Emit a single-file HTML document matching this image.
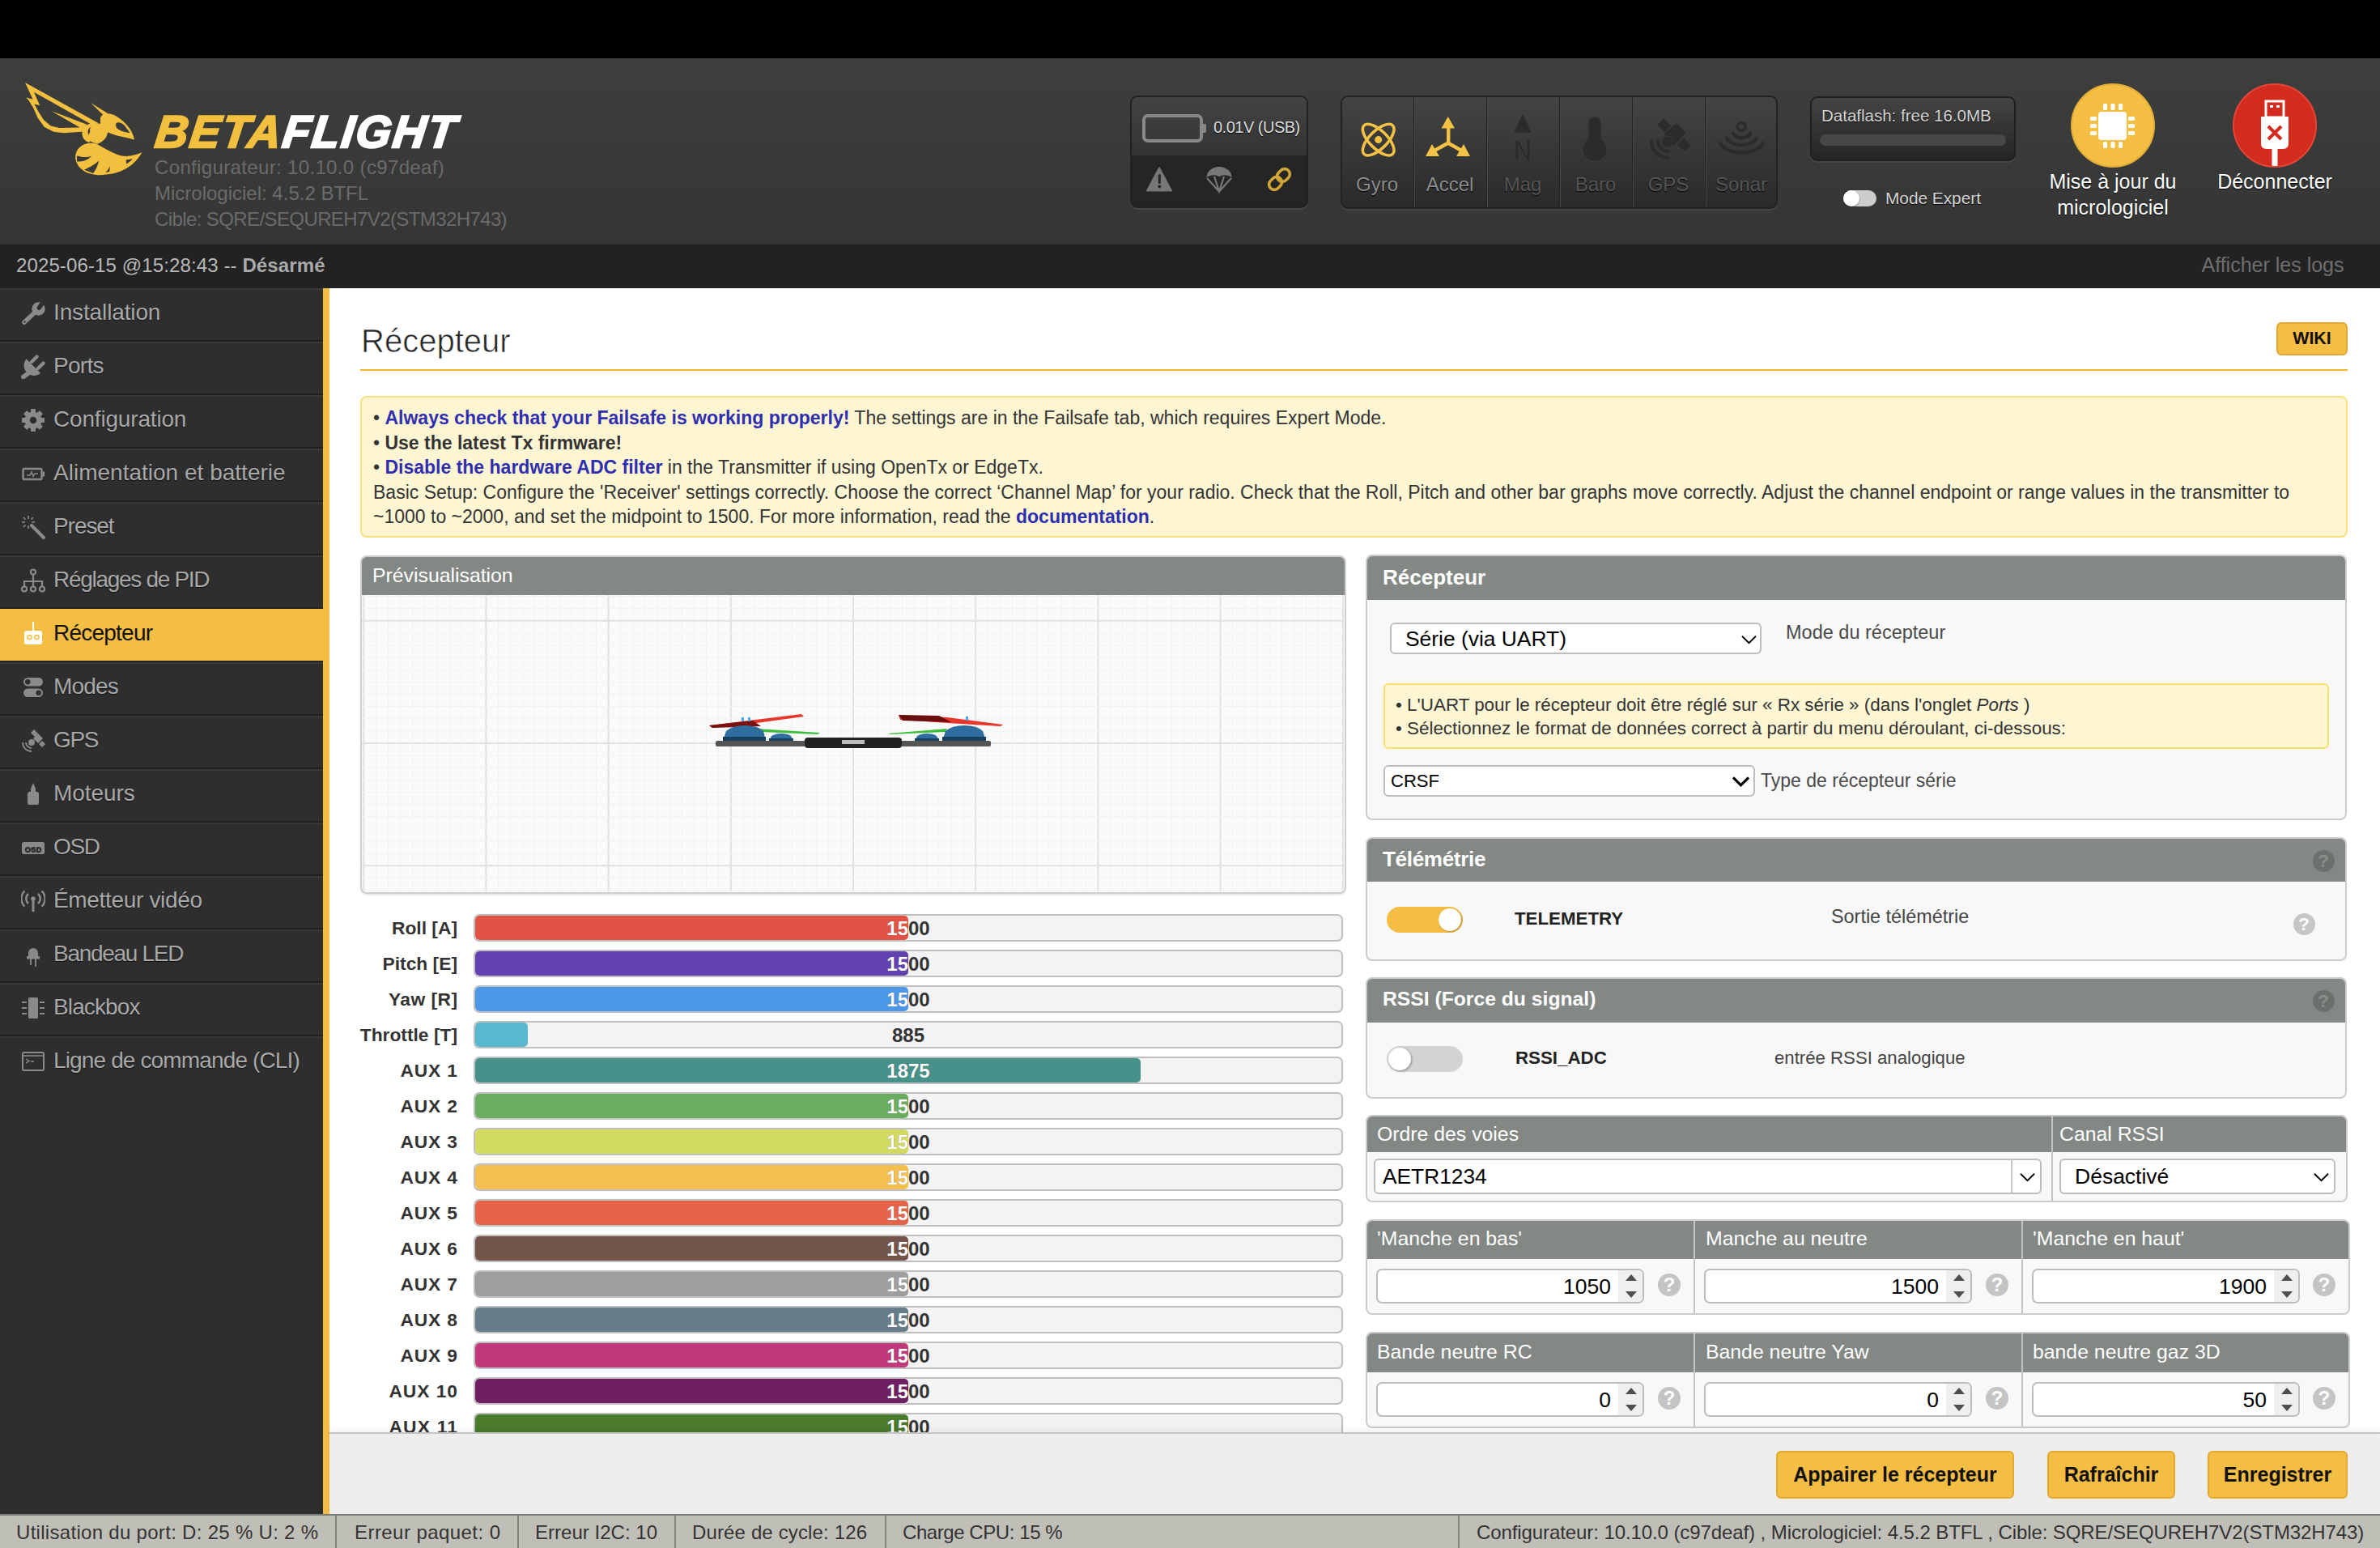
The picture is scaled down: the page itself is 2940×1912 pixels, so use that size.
<!DOCTYPE html>
<html><head><meta charset="utf-8">
<style>
*{box-sizing:border-box;margin:0;padding:0}
html,body{width:2940px;height:1912px;overflow:hidden;background:#fff;font-family:"Liberation Sans",sans-serif}
.abs{position:absolute}
#topbar{position:absolute;left:0;top:0;width:2940px;height:72px;background:#000}
#header{position:absolute;left:0;top:72px;width:2940px;height:230px;background:linear-gradient(#3d3f3d,#343534)}
#status{position:absolute;left:0;top:302px;width:2940px;height:54px;background:#222;color:#b8b8b8}
#sidebar{position:absolute;left:0;top:356px;width:399px;height:1514px;background:#2e2e2e}
#sidebar .item{position:absolute;left:0;width:399px;height:66px;border-top:2px solid #383838;border-bottom:2px solid #1f1f1f;color:#a8a8a8;font-size:28px;line-height:28px;text-shadow:0 1px 1px #111}
#sidebar .item span{position:absolute;left:66px;top:14px;white-space:nowrap}
#sidebar .item.active{background:#f4bd43;color:#111;border-top-color:#f4bd43;border-bottom-color:#222;text-shadow:none}
#ybar{position:absolute;left:399px;top:356px;width:8px;height:1514px;background:#f4bd43}
#content{position:absolute;left:407px;top:356px;width:2533px;height:1414px;background:#fff;overflow:hidden}
#toolbar{position:absolute;left:407px;top:1769px;width:2533px;height:101px;background:#eeeeee;border-top:2px solid #c4c4c4;box-shadow:0 -4px 8px rgba(0,0,0,.05)}
#bottom{position:absolute;left:0;top:1870px;width:2940px;height:42px;background:#c0bfb7;border-top:2px solid #7d7d78;color:#333;font-size:23px}
.btn{position:absolute;background:#f4bd43;border:2px solid #e3a92d;border-radius:6px;color:#111;font-weight:bold;font-size:25px;text-align:center}
</style></head><body>
<div id="topbar"></div>
<div id="header"></div>
<!-- logo -->
<svg class="abs" style="left:20px;top:90px" width="170" height="140" viewBox="0 0 1880 1548">
<g fill="#f3bf3f">
<path d="M122,133 L1127,688 L891,805 L645,821 L511,805 L387,741 L296,618 L237,484 L179,387 L136,334 L227,361 Z M243,262 L1009,693 L859,746 L591,752 L473,725 L377,645 L302,527 L248,425 L323,446 Z" fill-rule="evenodd"/>
<path d="M479,521 L966,706 L880,752 Z"/>
<path d="M1018,410 L1250,552 L1200,585 Z"/>
<path d="M1150,610 C1180,540 1290,540 1380,600 C1500,680 1590,780 1615,915 C1480,870 1340,860 1250,810 C1240,900 1180,940 1110,970 L1020,940 C960,900 990,850 1010,800 C990,740 1050,700 1150,690 Z M1360,700 C1380,660 1440,680 1480,720 C1510,760 1540,800 1555,820 C1480,810 1400,790 1365,740 Z" fill-rule="evenodd"/>
<path d="M900,820 C900,740 960,700 1100,705 C1000,720 960,780 990,850 C1010,900 1020,930 1000,950 C930,930 900,880 900,820 Z"/>
<path d="M930,975 C1010,950 1090,960 1110,975 C1250,1060 1400,1140 1510,1140 C1600,1130 1680,1110 1720,1085 C1620,1260 1450,1390 1150,1395 C950,1395 820,1290 810,1160 C805,1080 850,1010 930,975 Z M830,1130 C900,1160 980,1150 1030,1135 C980,1190 900,1215 830,1210 Z M930,1325 C1000,1290 1080,1250 1130,1200 C1110,1280 1080,1340 1050,1370 Z M1220,1360 C1250,1330 1270,1300 1280,1275 L1275,1350 Z M1500,1190 L1590,1175 C1560,1210 1530,1230 1505,1245 Z" fill-rule="evenodd"/>
</g>
</svg>
<div class="abs" style="left:190px;top:134.5px;font-size:56px;line-height:56px;font-weight:bold;font-style:italic;letter-spacing:2.2px;color:#fff;white-space:nowrap;-webkit-text-stroke:2.4px #fff;transform:skewX(-7deg);transform-origin:0 48px"><span style="color:#f3bf3f;-webkit-text-stroke:2.4px #f3bf3f">BETA</span>FLIGHT</div>
<div class="abs" style="left:191px;top:190.5px;font-size:24px;line-height:32px;color:#6b6b6b;white-space:nowrap"><span style="letter-spacing:0.35px">Configurateur: 10.10.0 (c97deaf)</span><br>Micrologiciel: 4.5.2 BTFL<br><span style="letter-spacing:-0.6px">Cible: SQRE/SEQUREH7V2(STM32H743)</span></div>
<!-- battery widget -->
<div class="abs" style="left:1396px;top:118px;width:220px;height:139px;border-radius:9px;background:#252525;border:2px solid #222;box-shadow:0 2px 0 #474747;overflow:hidden">
<div style="position:absolute;left:0;top:0;width:216px;height:72px;background:linear-gradient(#444,#333)"></div>
</div>
<svg class="abs" style="left:1396px;top:118px" width="220" height="139" viewBox="1396 118 220 139">
<rect x="1413" y="143" width="71" height="31" rx="5" fill="none" stroke="#888" stroke-width="4"/>
<rect x="1484" y="153" width="6" height="11" rx="2" fill="#888"/>
<path d="M1432,207.5 L1447,235.5 L1417,235.5 Z" fill="#777" stroke="#777" stroke-width="2" stroke-linejoin="round"/>
<rect x="1430.8" y="215" width="3" height="12" rx="1.5" fill="#252525"/><circle cx="1432.3" cy="230.5" r="2" fill="#252525"/>
<path d="M1490.5,219 A15.5,13 0 0 1 1521.5,219 Q1514,214 1506,218 Q1498,214 1490.5,219 Z" fill="#777"/>
<path d="M1491,220 L1506,236.5 L1521,220 M1500,218 L1506,236.5 L1512,218" fill="none" stroke="#777" stroke-width="2.2"/>
<g transform="rotate(-45 1580.5 221.5)" fill="none" stroke="#d1a537" stroke-width="3.6">
<rect x="1565" y="215" width="17" height="13" rx="6.5"/><rect x="1579" y="215" width="17" height="13" rx="6.5"/>
</g>
</svg>
<div class="abs" style="left:1499px;top:146px;font-size:20px;line-height:22px;color:#ddd;letter-spacing:-0.5px;text-shadow:0 1px 1px #000;white-space:nowrap">0.01V (USB)</div>
<!-- sensors -->
<div class="abs" style="left:1656px;top:118px;width:540px;height:140px;border-radius:9px;background:linear-gradient(#444,#2a2a2a);border:2px solid #222;box-shadow:0 2px 0 #474747;overflow:hidden">
<div style="position:absolute;left:88px;top:0;width:2px;height:140px;background:#222;border-right:1px solid #474747"></div>
<div style="position:absolute;left:178px;top:0;width:2px;height:140px;background:#222;border-right:1px solid #474747"></div>
<div style="position:absolute;left:268px;top:0;width:2px;height:140px;background:#222;border-right:1px solid #474747"></div>
<div style="position:absolute;left:358px;top:0;width:2px;height:140px;background:#222;border-right:1px solid #474747"></div>
<div style="position:absolute;left:448px;top:0;width:2px;height:140px;background:#222;border-right:1px solid #474747"></div>
</div>
<svg class="abs" style="left:1656px;top:118px" width="540" height="140" viewBox="1656 118 540 140">
<g fill="none" stroke="#f3c143" stroke-width="3.6">
<ellipse cx="1702.7" cy="172.6" rx="25" ry="11" transform="rotate(45 1702.7 172.6)"/>
<ellipse cx="1702.7" cy="172.6" rx="25" ry="11" transform="rotate(-45 1702.7 172.6)"/>
</g>
<circle cx="1702.7" cy="172.6" r="4.5" fill="#f3c143"/>
<g fill="#f3c143">
<rect x="1787" y="157" width="4.4" height="20"/>
<path d="M1780.5,158.5 L1797,158.5 L1788.7,144 Z"/>
<path d="M1789,174 L1791,178 L1773,188 L1771,184 Z"/>
<path d="M1761,193 L1778,193 L1769,178 Z"/>
<path d="M1788.5,174 L1786.5,178 L1804.5,188 L1806.5,184 Z"/>
<path d="M1816,193 L1799,193 L1808,178 Z"/>
</g>
<g fill="#2b2b2b" stroke="#3e3e3e" stroke-width="0.8">
<path d="M1869,164.5 L1893,164.5 L1881,140 Z"/>
<path d="M1872,199 L1872,173 L1876,173 L1886,192 L1886,173 L1890,173 L1890,199 L1886,199 L1876,180 L1876,199 Z"/>
<path d="M1962,152 A8,8 0 0 1 1978,152 L1978,172 A15,15 0 1 1 1962,172 Z"/>
<path d="M2047,154.1 L2054.7,145.9 L2064.7,155.3 L2056.5,164.1 Z M2055.3,165.3 L2070.6,151.8 L2082.9,164.1 L2067.6,180.6 Z M2071.2,179.4 L2080,169.4 L2089.4,179.4 L2081.2,187.6 Z"/>
<circle cx="2059.4" cy="175.3" r="7"/>
<path d="M2040,174 A21,21 0 0 0 2061,195 M2048,173.5 A13,13 0 0 0 2061,186.5" fill="none" stroke="#2b2b2b" stroke-width="4.2" stroke-linecap="round"/>
<circle cx="2151.2" cy="156.5" r="5" fill="none" stroke="#2b2b2b" stroke-width="3.5"/>
<path d="M2141,165 A12,10 0 0 0 2162,165 M2133,171 A20,13 0 0 0 2170,171 M2125,177 A28,17 0 0 0 2178,177" fill="none" stroke="#2b2b2b" stroke-width="4.2" stroke-linecap="round"/>
</g>
</svg>
<div class="abs" style="left:1656px;top:214px;width:540px;font-size:24px;line-height:28px;white-space:nowrap;text-shadow:0 1px 1px #000">
<span class="abs" style="left:0;width:90px;text-align:center;color:#8d8d8d">Gyro</span>
<span class="abs" style="left:90px;width:90px;text-align:center;color:#8d8d8d">Accel</span>
<span class="abs" style="left:180px;width:90px;text-align:center;color:#565656">Mag</span>
<span class="abs" style="left:270px;width:90px;text-align:center;color:#565656">Baro</span>
<span class="abs" style="left:360px;width:90px;text-align:center;color:#565656">GPS</span>
<span class="abs" style="left:450px;width:90px;text-align:center;color:#565656">Sonar</span>
</div>
<!-- dataflash -->
<div class="abs" style="left:2236px;top:119px;width:254px;height:80px;border-radius:9px;background:linear-gradient(#444,#242424);border:2px solid #1f1f1f;box-shadow:0 2px 0 #474747"></div>
<div class="abs" style="left:2250px;top:131px;font-size:20.5px;line-height:24px;color:#d6d6d6;text-shadow:0 1px 1px #000;white-space:nowrap">Dataflash: free 16.0MB</div>
<div class="abs" style="left:2248px;top:166px;width:230px;height:14px;border-radius:7px;background:#474747"></div>
<div class="abs" style="left:2277px;top:235px;width:41px;height:20px;border-radius:10px;background:#cdcdcd"></div>
<div class="abs" style="left:2277px;top:235px;width:20px;height:20px;border-radius:10px;background:#fff;box-shadow:0 1px 2px rgba(0,0,0,.4)"></div>
<div class="abs" style="left:2329px;top:233px;font-size:20.8px;line-height:24px;color:#d6d6d6;text-shadow:0 1px 1px #000;white-space:nowrap">Mode Expert</div>
<!-- flasher -->
<div class="abs" style="left:2558px;top:103px;width:104px;height:104px;border-radius:52px;background:#f3be42;border:2px solid #e2ad38"></div>
<svg class="abs" style="left:2558px;top:103px" width="104" height="104" viewBox="2558 103 104 104" fill="#fff">
<rect x="2592" y="138" width="35" height="35" rx="4"/>
<rect x="2598" y="128" width="5" height="8" rx="1.5"/><rect x="2607.5" y="128" width="5" height="8" rx="1.5"/><rect x="2617" y="128" width="5" height="8" rx="1.5"/>
<rect x="2598" y="175" width="5" height="8" rx="1.5"/><rect x="2607.5" y="175" width="5" height="8" rx="1.5"/><rect x="2617" y="175" width="5" height="8" rx="1.5"/>
<rect x="2582" y="144" width="8" height="5" rx="1.5"/><rect x="2582" y="153" width="8" height="5" rx="1.5"/><rect x="2582" y="162" width="8" height="5" rx="1.5"/>
<rect x="2629" y="144" width="8" height="5" rx="1.5"/><rect x="2629" y="153" width="8" height="5" rx="1.5"/><rect x="2629" y="162" width="8" height="5" rx="1.5"/>
</svg>
<div class="abs" style="left:2510px;top:208px;width:200px;text-align:center;font-size:25px;line-height:32px;color:#fff;text-shadow:0 1px 1px #000">Mise à jour du<br>micrologiciel</div>
<!-- disconnect -->
<div class="abs" style="left:2758px;top:103px;width:104px;height:104px;border-radius:52px;background:#d42b1f;border:2px solid #e54537;overflow:hidden">
<svg width="100" height="100" viewBox="2760 105 100 100">
<rect x="2799" y="125" width="22" height="20" fill="none" stroke="#fff" stroke-width="3"/>
<rect x="2804" y="130" width="4" height="3" fill="#fff"/><rect x="2812" y="130" width="4" height="3" fill="#fff"/>
<path d="M2793,144 L2827,144 L2827,177 Q2827,184 2820,184 L2800,184 Q2793,184 2793,177 Z" fill="#fff"/>
<rect x="2806.5" y="183" width="7" height="25" fill="#fff"/>
<path d="M2802,156 L2818,172 M2818,156 L2802,172" stroke="#d42b1f" stroke-width="4"/>
</svg>
</div>
<div class="abs" style="left:2710px;top:208px;width:200px;text-align:center;font-size:25px;line-height:32px;color:#fff;text-shadow:0 1px 1px #000">Déconnecter</div>

<div id="status"><span class="abs" style="left:20px;top:13.5px;font-size:24px;line-height:24px;letter-spacing:0.12px;white-space:nowrap">2025-06-15 @15:28:43 -- <b style="color:#a9a9a9">Désarmé</b></span><span class="abs" style="right:44.5px;top:12.9px;font-size:25px;line-height:25px;color:#6e6e6e;white-space:nowrap">Afficher les logs</span></div>
<div id="sidebar">
<div class="item" style="top:0px"><svg style="position:absolute;left:26px;top:14px" width="30" height="30" viewBox="0 0 30 30"><path d="M4,26 L17,14" stroke="#8a8a8a" stroke-width="5.6" stroke-linecap="round"/><circle cx="21.5" cy="9.5" r="8.2" fill="#8a8a8a"/><path d="M22.3,8.2 L28,0" stroke="#2e2e2e" stroke-width="5.4" stroke-linecap="round"/><circle cx="4.6" cy="25.4" r="1.2" fill="#2e2e2e"/></svg><span style="letter-spacing:-0.13px">Installation</span></div>
<div class="item" style="top:66px"><svg style="position:absolute;left:26px;top:14px" width="30" height="30" viewBox="0 0 30 30"><path d="M6.5,5.3 L24.3,23 A12.6,12.6 0 0 1 6.5,5.3 Z" fill="#8a8a8a"/><path d="M13,9 L19.5,2.5 M21,17 L27.5,10.5" stroke="#8a8a8a" stroke-width="4.4" stroke-linecap="round"/><path d="M11,21.5 L3,27.5" stroke="#8a8a8a" stroke-width="5.8" stroke-linecap="round"/></svg><span style="letter-spacing:-0.73px">Ports</span></div>
<div class="item" style="top:132px"><svg style="position:absolute;left:26px;top:14px" width="30" height="30" viewBox="0 0 30 30"><g fill="#8a8a8a"><circle cx="15" cy="15" r="10.5"/><rect x="12" y="1" width="6" height="7" rx="1" transform="rotate(0 15 15)"/><rect x="12" y="1" width="6" height="7" rx="1" transform="rotate(45 15 15)"/><rect x="12" y="1" width="6" height="7" rx="1" transform="rotate(90 15 15)"/><rect x="12" y="1" width="6" height="7" rx="1" transform="rotate(135 15 15)"/><rect x="12" y="1" width="6" height="7" rx="1" transform="rotate(180 15 15)"/><rect x="12" y="1" width="6" height="7" rx="1" transform="rotate(225 15 15)"/><rect x="12" y="1" width="6" height="7" rx="1" transform="rotate(270 15 15)"/><rect x="12" y="1" width="6" height="7" rx="1" transform="rotate(315 15 15)"/></g><circle cx="15" cy="15" r="4.2" fill="#2e2e2e"/></svg><span style="letter-spacing:-0.18px">Configuration</span></div>
<div class="item" style="top:198px"><svg style="position:absolute;left:26px;top:14px" width="30" height="30" viewBox="0 0 30 30"><rect x="2.5" y="9" width="23" height="13" rx="1.5" fill="none" stroke="#8a8a8a" stroke-width="2.4"/><rect x="26" y="12.5" width="3" height="6" fill="#8a8a8a"/><path d="M7,17 L11,17 L13,13 L15,18 L17,15 L21,15" fill="none" stroke="#8a8a8a" stroke-width="1.6"/></svg><span style="letter-spacing:0.01px">Alimentation et batterie</span></div>
<div class="item" style="top:264px"><svg style="position:absolute;left:26px;top:14px" width="30" height="30" viewBox="0 0 30 30"><path d="M13,13 L28,28" stroke="#8a8a8a" stroke-width="4" stroke-linecap="round"/><path d="M9,1 L9,5 M9,13 L9,17 M1,9 L5,9 M13,9 L17,9 M3,3 L5.5,5.5 M12.5,12.5 L15,15 M3,15 L5.5,12.5 M12.5,5.5 L15,3" stroke="#8a8a8a" stroke-width="1.6"/></svg><span style="letter-spacing:-1.06px">Preset</span></div>
<div class="item" style="top:330px"><svg style="position:absolute;left:26px;top:14px" width="30" height="30" viewBox="0 0 30 30"><g fill="none" stroke="#8a8a8a" stroke-width="2.2"><circle cx="15" cy="4.5" r="3"/><circle cx="4" cy="25.5" r="3"/><circle cx="15" cy="25.5" r="3"/><circle cx="26" cy="25.5" r="3"/><path d="M15,7.5 L15,22.5 M4,22.5 L4,16 L26,16 L26,22.5"/></g></svg><span style="letter-spacing:-1.30px">Réglages de PID</span></div>
<div class="item active" style="top:396px"><svg style="position:absolute;left:26px;top:14px" width="30" height="30" viewBox="0 0 30 30"><rect x="4" y="11" width="22" height="17" rx="3" fill="#fff"/><rect x="14" y="0" width="2" height="11" fill="#fff"/><circle cx="10.5" cy="19" r="2.6" fill="none" stroke="#f4bd43" stroke-width="1.5"/><circle cx="19.5" cy="19" r="2.6" fill="none" stroke="#f4bd43" stroke-width="1.5"/></svg><span style="letter-spacing:-0.77px">Récepteur</span></div>
<div class="item" style="top:462px"><svg style="position:absolute;left:26px;top:14px" width="30" height="30" viewBox="0 0 30 30"><rect x="3" y="3" width="24" height="10.5" rx="5.2" fill="#8a8a8a"/><circle cx="8.3" cy="8.2" r="3.2" fill="#2e2e2e"/><rect x="3" y="16.5" width="24" height="10.5" rx="5.2" fill="#8a8a8a"/><circle cx="21.7" cy="21.7" r="3.2" fill="#2e2e2e"/></svg><span style="letter-spacing:-0.85px">Modes</span></div>
<div class="item" style="top:528px"><svg style="position:absolute;left:26px;top:14px" width="30" height="30" viewBox="0 0 30 30"><g fill="#8a8a8a"><path d="M12,5 L16,1 L21,6 L17,10 Z M15,12 L21,6 L27,12 L21,18 Z M22,19 L26,15 L30,19 L26,23 Z"/><circle cx="13" cy="17" r="4"/></g><path d="M2,17 A11,11 0 0 0 13,28 M6,17 A7,7 0 0 0 13,24" fill="none" stroke="#8a8a8a" stroke-width="1.8"/></svg><span style="letter-spacing:-1.30px">GPS</span></div>
<div class="item" style="top:594px"><svg style="position:absolute;left:26px;top:14px" width="30" height="30" viewBox="0 0 30 30"><path d="M15,1 L18,8 L18,13 L12,13 L12,8 Z" fill="#8a8a8a"/><rect x="8" y="12" width="14" height="16" rx="2.5" fill="#8a8a8a"/></svg><span style="letter-spacing:-0.07px">Moteurs</span></div>
<div class="item" style="top:660px"><svg style="position:absolute;left:26px;top:14px" width="30" height="30" viewBox="0 0 30 30"><rect x="1" y="8" width="28" height="15" rx="2.5" fill="#8a8a8a"/><text x="15" y="20" font-size="9.5" font-weight="bold" text-anchor="middle" fill="#2e2e2e" font-family="Liberation Sans">OSD</text></svg><span style="letter-spacing:-1.30px">OSD</span></div>
<div class="item" style="top:726px"><svg style="position:absolute;left:26px;top:14px" width="30" height="30" viewBox="0 0 30 30"><circle cx="15" cy="12" r="2.8" fill="#8a8a8a"/><path d="M15,13 L15,28" stroke="#8a8a8a" stroke-width="3"/><path d="M9,6 A8,8 0 0 0 9,18 M21,6 A8,8 0 0 1 21,18 M4.5,2.5 A13,13 0 0 0 4.5,21.5 M25.5,2.5 A13,13 0 0 1 25.5,21.5" fill="none" stroke="#8a8a8a" stroke-width="2.4"/></svg><span style="letter-spacing:-0.33px">Émetteur vidéo</span></div>
<div class="item" style="top:792px"><svg style="position:absolute;left:26px;top:14px" width="30" height="30" viewBox="0 0 30 30"><path d="M9,13 A6,6 0 0 1 21,13 L21,18 L9,18 Z" fill="#8a8a8a"/><rect x="7" y="17" width="16" height="3.5" fill="#8a8a8a"/><path d="M12,20 L12,28 M18,20 L18,30" stroke="#8a8a8a" stroke-width="1.8"/></svg><span style="letter-spacing:-1.30px">Bandeau LED</span></div>
<div class="item" style="top:858px"><svg style="position:absolute;left:26px;top:14px" width="30" height="30" viewBox="0 0 30 30"><rect x="9" y="2" width="12" height="26" rx="1.5" fill="#8a8a8a"/><path d="M1,8 L7,8 M1,15 L7,15 M1,22 L7,22 M23,8 L29,8 M23,15 L29,15 M23,22 L29,22" stroke="#8a8a8a" stroke-width="1.8"/></svg><span style="letter-spacing:-0.87px">Blackbox</span></div>
<div class="item" style="top:924px;border-bottom:none"><svg style="position:absolute;left:26px;top:14px" width="30" height="30" viewBox="0 0 30 30"><rect x="2" y="4" width="26" height="22" rx="1.5" fill="none" stroke="#8a8a8a" stroke-width="2"/><path d="M2,8 L28,8" stroke="#8a8a8a" stroke-width="1.5"/><path d="M6,12 L10,14.5 L6,17 M12,15 L16,15" fill="none" stroke="#8a8a8a" stroke-width="1.4"/></svg><span style="letter-spacing:-0.86px">Ligne de commande (CLI)</span></div>
</div>
<div id="ybar"></div>
<div id="content"></div>
<div class="abs" style="left:446px;top:401px;font-size:40px;line-height:40px;color:#262626;white-space:nowrap;-webkit-text-stroke:0.6px #fff">Récepteur</div>
<div class="abs" style="left:445px;top:456px;width:2455px;height:2px;background:#f2b52e"></div>
<div class="abs" style="left:2812px;top:398px;width:88px;height:41px;border-radius:6px;background:#f4bd43;border:2px solid #e0a935;font-size:21.4px;line-height:37px;font-weight:bold;text-align:center;color:#111">WIKI</div>
<div class="abs" style="left:445px;top:489px;width:2455px;height:175px;border-radius:8px;background:#fef6d3;border:2px solid #f6e27c"></div>
<div class="abs" style="left:461px;top:501px;width:2420px;font-size:23px;line-height:30.5px;color:#333;white-space:nowrap">• <b style="color:#2e2eb0">Always check that your Failsafe is working properly!</b> The settings are in the Failsafe tab, which requires Expert Mode.<br>• <b>Use the latest Tx firmware!</b><br>• <b style="color:#2e2eb0">Disable the hardware ADC filter</b> in the Transmitter if using OpenTx or EdgeTx.<br>Basic Setup: Configure the 'Receiver' settings correctly. Choose the correct ‘Channel Map’ for your radio. Check that the Roll, Pitch and other bar graphs move correctly. Adjust the channel endpoint or range values in the transmitter to<br>~1000 to ~2000, and set the midpoint to 1500. For more information, read the <b style="color:#2e2eb0">documentation</b>.</div>
<div class="abs" style="left:445px;top:686px;width:1218px;height:418px;border-radius:8px;border:2px solid #cfcfcf;background:#fafafa;overflow:hidden;box-shadow:0 2px 1px rgba(0,0,0,.08)">
<div style="position:absolute;left:0;top:0;width:1214px;height:47px;background:#838884"></div>
<svg style="position:absolute;left:0;top:47px" width="1213" height="366"><line x1="2.20" y1="0" x2="2.20" y2="366" stroke="#e1e1e1" stroke-width="2"/><line x1="17.32" y1="0" x2="17.32" y2="366" stroke="#f2f2f2" stroke-width="1"/><line x1="32.44" y1="0" x2="32.44" y2="366" stroke="#f2f2f2" stroke-width="1"/><line x1="47.56" y1="0" x2="47.56" y2="366" stroke="#f2f2f2" stroke-width="1"/><line x1="62.68" y1="0" x2="62.68" y2="366" stroke="#f2f2f2" stroke-width="1"/><line x1="77.80" y1="0" x2="77.80" y2="366" stroke="#f2f2f2" stroke-width="1"/><line x1="92.92" y1="0" x2="92.92" y2="366" stroke="#f2f2f2" stroke-width="1"/><line x1="108.04" y1="0" x2="108.04" y2="366" stroke="#f2f2f2" stroke-width="1"/><line x1="123.16" y1="0" x2="123.16" y2="366" stroke="#f2f2f2" stroke-width="1"/><line x1="138.28" y1="0" x2="138.28" y2="366" stroke="#f2f2f2" stroke-width="1"/><line x1="153.40" y1="0" x2="153.40" y2="366" stroke="#e1e1e1" stroke-width="2"/><line x1="168.52" y1="0" x2="168.52" y2="366" stroke="#f2f2f2" stroke-width="1"/><line x1="183.64" y1="0" x2="183.64" y2="366" stroke="#f2f2f2" stroke-width="1"/><line x1="198.76" y1="0" x2="198.76" y2="366" stroke="#f2f2f2" stroke-width="1"/><line x1="213.88" y1="0" x2="213.88" y2="366" stroke="#f2f2f2" stroke-width="1"/><line x1="229.00" y1="0" x2="229.00" y2="366" stroke="#f2f2f2" stroke-width="1"/><line x1="244.12" y1="0" x2="244.12" y2="366" stroke="#f2f2f2" stroke-width="1"/><line x1="259.24" y1="0" x2="259.24" y2="366" stroke="#f2f2f2" stroke-width="1"/><line x1="274.36" y1="0" x2="274.36" y2="366" stroke="#f2f2f2" stroke-width="1"/><line x1="289.48" y1="0" x2="289.48" y2="366" stroke="#f2f2f2" stroke-width="1"/><line x1="304.60" y1="0" x2="304.60" y2="366" stroke="#e1e1e1" stroke-width="2"/><line x1="319.72" y1="0" x2="319.72" y2="366" stroke="#f2f2f2" stroke-width="1"/><line x1="334.84" y1="0" x2="334.84" y2="366" stroke="#f2f2f2" stroke-width="1"/><line x1="349.96" y1="0" x2="349.96" y2="366" stroke="#f2f2f2" stroke-width="1"/><line x1="365.08" y1="0" x2="365.08" y2="366" stroke="#f2f2f2" stroke-width="1"/><line x1="380.20" y1="0" x2="380.20" y2="366" stroke="#f2f2f2" stroke-width="1"/><line x1="395.32" y1="0" x2="395.32" y2="366" stroke="#f2f2f2" stroke-width="1"/><line x1="410.44" y1="0" x2="410.44" y2="366" stroke="#f2f2f2" stroke-width="1"/><line x1="425.56" y1="0" x2="425.56" y2="366" stroke="#f2f2f2" stroke-width="1"/><line x1="440.68" y1="0" x2="440.68" y2="366" stroke="#f2f2f2" stroke-width="1"/><line x1="455.80" y1="0" x2="455.80" y2="366" stroke="#e1e1e1" stroke-width="2"/><line x1="470.92" y1="0" x2="470.92" y2="366" stroke="#f2f2f2" stroke-width="1"/><line x1="486.04" y1="0" x2="486.04" y2="366" stroke="#f2f2f2" stroke-width="1"/><line x1="501.16" y1="0" x2="501.16" y2="366" stroke="#f2f2f2" stroke-width="1"/><line x1="516.28" y1="0" x2="516.28" y2="366" stroke="#f2f2f2" stroke-width="1"/><line x1="531.40" y1="0" x2="531.40" y2="366" stroke="#f2f2f2" stroke-width="1"/><line x1="546.52" y1="0" x2="546.52" y2="366" stroke="#f2f2f2" stroke-width="1"/><line x1="561.64" y1="0" x2="561.64" y2="366" stroke="#f2f2f2" stroke-width="1"/><line x1="576.76" y1="0" x2="576.76" y2="366" stroke="#f2f2f2" stroke-width="1"/><line x1="591.88" y1="0" x2="591.88" y2="366" stroke="#f2f2f2" stroke-width="1"/><line x1="607.00" y1="0" x2="607.00" y2="366" stroke="#e1e1e1" stroke-width="2"/><line x1="622.12" y1="0" x2="622.12" y2="366" stroke="#f2f2f2" stroke-width="1"/><line x1="637.24" y1="0" x2="637.24" y2="366" stroke="#f2f2f2" stroke-width="1"/><line x1="652.36" y1="0" x2="652.36" y2="366" stroke="#f2f2f2" stroke-width="1"/><line x1="667.48" y1="0" x2="667.48" y2="366" stroke="#f2f2f2" stroke-width="1"/><line x1="682.60" y1="0" x2="682.60" y2="366" stroke="#f2f2f2" stroke-width="1"/><line x1="697.72" y1="0" x2="697.72" y2="366" stroke="#f2f2f2" stroke-width="1"/><line x1="712.84" y1="0" x2="712.84" y2="366" stroke="#f2f2f2" stroke-width="1"/><line x1="727.96" y1="0" x2="727.96" y2="366" stroke="#f2f2f2" stroke-width="1"/><line x1="743.08" y1="0" x2="743.08" y2="366" stroke="#f2f2f2" stroke-width="1"/><line x1="758.20" y1="0" x2="758.20" y2="366" stroke="#e1e1e1" stroke-width="2"/><line x1="773.32" y1="0" x2="773.32" y2="366" stroke="#f2f2f2" stroke-width="1"/><line x1="788.44" y1="0" x2="788.44" y2="366" stroke="#f2f2f2" stroke-width="1"/><line x1="803.56" y1="0" x2="803.56" y2="366" stroke="#f2f2f2" stroke-width="1"/><line x1="818.68" y1="0" x2="818.68" y2="366" stroke="#f2f2f2" stroke-width="1"/><line x1="833.80" y1="0" x2="833.80" y2="366" stroke="#f2f2f2" stroke-width="1"/><line x1="848.92" y1="0" x2="848.92" y2="366" stroke="#f2f2f2" stroke-width="1"/><line x1="864.04" y1="0" x2="864.04" y2="366" stroke="#f2f2f2" stroke-width="1"/><line x1="879.16" y1="0" x2="879.16" y2="366" stroke="#f2f2f2" stroke-width="1"/><line x1="894.28" y1="0" x2="894.28" y2="366" stroke="#f2f2f2" stroke-width="1"/><line x1="909.40" y1="0" x2="909.40" y2="366" stroke="#e1e1e1" stroke-width="2"/><line x1="924.52" y1="0" x2="924.52" y2="366" stroke="#f2f2f2" stroke-width="1"/><line x1="939.64" y1="0" x2="939.64" y2="366" stroke="#f2f2f2" stroke-width="1"/><line x1="954.76" y1="0" x2="954.76" y2="366" stroke="#f2f2f2" stroke-width="1"/><line x1="969.88" y1="0" x2="969.88" y2="366" stroke="#f2f2f2" stroke-width="1"/><line x1="985.00" y1="0" x2="985.00" y2="366" stroke="#f2f2f2" stroke-width="1"/><line x1="1000.12" y1="0" x2="1000.12" y2="366" stroke="#f2f2f2" stroke-width="1"/><line x1="1015.24" y1="0" x2="1015.24" y2="366" stroke="#f2f2f2" stroke-width="1"/><line x1="1030.36" y1="0" x2="1030.36" y2="366" stroke="#f2f2f2" stroke-width="1"/><line x1="1045.48" y1="0" x2="1045.48" y2="366" stroke="#f2f2f2" stroke-width="1"/><line x1="1060.60" y1="0" x2="1060.60" y2="366" stroke="#e1e1e1" stroke-width="2"/><line x1="1075.72" y1="0" x2="1075.72" y2="366" stroke="#f2f2f2" stroke-width="1"/><line x1="1090.84" y1="0" x2="1090.84" y2="366" stroke="#f2f2f2" stroke-width="1"/><line x1="1105.96" y1="0" x2="1105.96" y2="366" stroke="#f2f2f2" stroke-width="1"/><line x1="1121.08" y1="0" x2="1121.08" y2="366" stroke="#f2f2f2" stroke-width="1"/><line x1="1136.20" y1="0" x2="1136.20" y2="366" stroke="#f2f2f2" stroke-width="1"/><line x1="1151.32" y1="0" x2="1151.32" y2="366" stroke="#f2f2f2" stroke-width="1"/><line x1="1166.44" y1="0" x2="1166.44" y2="366" stroke="#f2f2f2" stroke-width="1"/><line x1="1181.56" y1="0" x2="1181.56" y2="366" stroke="#f2f2f2" stroke-width="1"/><line x1="1196.68" y1="0" x2="1196.68" y2="366" stroke="#f2f2f2" stroke-width="1"/><line x1="1211.80" y1="0" x2="1211.80" y2="366" stroke="#e1e1e1" stroke-width="2"/><line x1="0" y1="1.56" x2="1213" y2="1.56" stroke="#f2f2f2" stroke-width="1"/><line x1="0" y1="16.68" x2="1213" y2="16.68" stroke="#f2f2f2" stroke-width="1"/><line x1="0" y1="31.80" x2="1213" y2="31.80" stroke="#e1e1e1" stroke-width="2"/><line x1="0" y1="46.92" x2="1213" y2="46.92" stroke="#f2f2f2" stroke-width="1"/><line x1="0" y1="62.04" x2="1213" y2="62.04" stroke="#f2f2f2" stroke-width="1"/><line x1="0" y1="77.16" x2="1213" y2="77.16" stroke="#f2f2f2" stroke-width="1"/><line x1="0" y1="92.28" x2="1213" y2="92.28" stroke="#f2f2f2" stroke-width="1"/><line x1="0" y1="107.40" x2="1213" y2="107.40" stroke="#f2f2f2" stroke-width="1"/><line x1="0" y1="122.52" x2="1213" y2="122.52" stroke="#f2f2f2" stroke-width="1"/><line x1="0" y1="137.64" x2="1213" y2="137.64" stroke="#f2f2f2" stroke-width="1"/><line x1="0" y1="152.76" x2="1213" y2="152.76" stroke="#f2f2f2" stroke-width="1"/><line x1="0" y1="167.88" x2="1213" y2="167.88" stroke="#f2f2f2" stroke-width="1"/><line x1="0" y1="183.00" x2="1213" y2="183.00" stroke="#e1e1e1" stroke-width="2"/><line x1="0" y1="198.12" x2="1213" y2="198.12" stroke="#f2f2f2" stroke-width="1"/><line x1="0" y1="213.24" x2="1213" y2="213.24" stroke="#f2f2f2" stroke-width="1"/><line x1="0" y1="228.36" x2="1213" y2="228.36" stroke="#f2f2f2" stroke-width="1"/><line x1="0" y1="243.48" x2="1213" y2="243.48" stroke="#f2f2f2" stroke-width="1"/><line x1="0" y1="258.60" x2="1213" y2="258.60" stroke="#f2f2f2" stroke-width="1"/><line x1="0" y1="273.72" x2="1213" y2="273.72" stroke="#f2f2f2" stroke-width="1"/><line x1="0" y1="288.84" x2="1213" y2="288.84" stroke="#f2f2f2" stroke-width="1"/><line x1="0" y1="303.96" x2="1213" y2="303.96" stroke="#f2f2f2" stroke-width="1"/><line x1="0" y1="319.08" x2="1213" y2="319.08" stroke="#f2f2f2" stroke-width="1"/><line x1="0" y1="334.20" x2="1213" y2="334.20" stroke="#e1e1e1" stroke-width="2"/><line x1="0" y1="349.32" x2="1213" y2="349.32" stroke="#f2f2f2" stroke-width="1"/><line x1="0" y1="364.44" x2="1213" y2="364.44" stroke="#f2f2f2" stroke-width="1"/></svg>
</div>
<div class="abs" style="left:460px;top:697px;font-size:24.8px;line-height:28px;color:#fff;white-space:nowrap">Prévisualisation</div>
<svg class="abs" style="left:860px;top:870px" width="400" height="70" viewBox="860 870 400 70">
<path d="M876,896 L990,882 L993,885 L935,893 L880,899 Z" fill="#e8372a"/>
<path d="M876,896 L930,890 L940,897 L880,899 Z" fill="#7a1010"/>
<path d="M934,900 L1013,905 L1010,907 L940,904 Z" fill="#3cc03c"/>
<path d="M1110,883 L1170,886 L1239,895 L1236,897 L1170,893 L1112,889 Z" fill="#e8372a"/>
<path d="M1110,883 L1160,884 L1175,892 L1115,890 Z" fill="#6a0f0f"/>
<path d="M1097,906 L1170,900 L1168,904 L1100,907 Z" fill="#3cc03c"/>
<rect x="884" y="915" width="340" height="7" rx="2" fill="#555"/>
<rect x="994" y="911" width="120" height="13" rx="4" fill="#222"/>
<rect x="1040" y="914" width="28" height="5" fill="#bbb"/>
<path d="M893,915 L897,903 Q905,896 920,896 Q936,896 943,903 L946,915 Z" fill="#2f6d9e"/>
<path d="M950,915 L953,909 Q958,906 965,906 Q973,906 977,909 L980,915 Z" fill="#2f6d9e"/>
<path d="M1164,915 L1168,903 Q1176,896 1191,896 Q1207,896 1214,903 L1218,915 Z" fill="#2f6d9e"/>
<path d="M1130,915 L1133,909 Q1138,906 1145,906 Q1153,906 1157,909 L1160,915 Z" fill="#2f6d9e"/>
<rect x="893" y="910" width="53" height="5" fill="#173f5e"/><rect x="1164" y="910" width="54" height="5" fill="#173f5e"/>
<rect x="950" y="912" width="30" height="3" fill="#173f5e"/><rect x="1130" y="912" width="30" height="3" fill="#173f5e"/>
<rect x="916" y="886" width="3" height="5" fill="#4aa8e8"/><rect x="924" y="886" width="3" height="5" fill="#4aa8e8"/><rect x="1193" y="885" width="3" height="5" fill="#4aa8e8"/>
</svg>
<div class="abs" style="left:385.00px;top:1132px;width:180px;text-align:right;font-size:22.8px;line-height:28px;font-weight:bold;color:#333;white-space:nowrap;letter-spacing:0px">Roll [A]</div>
<div class="abs" style="left:585px;top:1129px;width:1074px;height:34px;border-radius:7px;border:2px solid #bfbfbf;background:#f3f3f3;overflow:hidden"><div style="position:absolute;left:0;top:0;width:535px;height:30px;background:#e05345;border-radius:5px"></div><div style="position:absolute;left:0;top:2px;width:1070px;text-align:center;font-size:24px;line-height:28px;font-weight:bold;color:#333">1500</div><div style="position:absolute;left:0;top:0;width:535px;height:30px;overflow:hidden"><div style="position:absolute;left:0;top:2px;width:1070px;text-align:center;font-size:24px;line-height:28px;font-weight:bold;color:#fff">1500</div></div></div>
<div class="abs" style="left:385.00px;top:1176px;width:180px;text-align:right;font-size:22.8px;line-height:28px;font-weight:bold;color:#333;white-space:nowrap;letter-spacing:0px">Pitch [E]</div>
<div class="abs" style="left:585px;top:1173px;width:1074px;height:34px;border-radius:7px;border:2px solid #bfbfbf;background:#f3f3f3;overflow:hidden"><div style="position:absolute;left:0;top:0;width:535px;height:30px;background:#6441b0;border-radius:5px"></div><div style="position:absolute;left:0;top:2px;width:1070px;text-align:center;font-size:24px;line-height:28px;font-weight:bold;color:#333">1500</div><div style="position:absolute;left:0;top:0;width:535px;height:30px;overflow:hidden"><div style="position:absolute;left:0;top:2px;width:1070px;text-align:center;font-size:24px;line-height:28px;font-weight:bold;color:#fff">1500</div></div></div>
<div class="abs" style="left:385.45px;top:1220px;width:180px;text-align:right;font-size:22.8px;line-height:28px;font-weight:bold;color:#333;white-space:nowrap;letter-spacing:0.45px">Yaw [R]</div>
<div class="abs" style="left:585px;top:1217px;width:1074px;height:34px;border-radius:7px;border:2px solid #bfbfbf;background:#f3f3f3;overflow:hidden"><div style="position:absolute;left:0;top:0;width:535px;height:30px;background:#4d97e8;border-radius:5px"></div><div style="position:absolute;left:0;top:2px;width:1070px;text-align:center;font-size:24px;line-height:28px;font-weight:bold;color:#333">1500</div><div style="position:absolute;left:0;top:0;width:535px;height:30px;overflow:hidden"><div style="position:absolute;left:0;top:2px;width:1070px;text-align:center;font-size:24px;line-height:28px;font-weight:bold;color:#fff">1500</div></div></div>
<div class="abs" style="left:385.00px;top:1264px;width:180px;text-align:right;font-size:22.8px;line-height:28px;font-weight:bold;color:#333;white-space:nowrap;letter-spacing:0px">Throttle [T]</div>
<div class="abs" style="left:585px;top:1261px;width:1074px;height:34px;border-radius:7px;border:2px solid #bfbfbf;background:#f3f3f3;overflow:hidden"><div style="position:absolute;left:0;top:0;width:65px;height:30px;background:#57b8cf;border-radius:5px"></div><div style="position:absolute;left:0;top:2px;width:1070px;text-align:center;font-size:24px;line-height:28px;font-weight:bold;color:#333">885</div><div style="position:absolute;left:0;top:0;width:65px;height:30px;overflow:hidden"><div style="position:absolute;left:0;top:2px;width:1070px;text-align:center;font-size:24px;line-height:28px;font-weight:bold;color:#fff">885</div></div></div>
<div class="abs" style="left:385.85px;top:1308px;width:180px;text-align:right;font-size:22.8px;line-height:28px;font-weight:bold;color:#333;white-space:nowrap;letter-spacing:0.85px">AUX 1</div>
<div class="abs" style="left:585px;top:1305px;width:1074px;height:34px;border-radius:7px;border:2px solid #bfbfbf;background:#f3f3f3;overflow:hidden"><div style="position:absolute;left:0;top:0;width:822px;height:30px;background:#46918a;border-radius:5px"></div><div style="position:absolute;left:0;top:2px;width:1070px;text-align:center;font-size:24px;line-height:28px;font-weight:bold;color:#333">1875</div><div style="position:absolute;left:0;top:0;width:822px;height:30px;overflow:hidden"><div style="position:absolute;left:0;top:2px;width:1070px;text-align:center;font-size:24px;line-height:28px;font-weight:bold;color:#fff">1875</div></div></div>
<div class="abs" style="left:385.85px;top:1352px;width:180px;text-align:right;font-size:22.8px;line-height:28px;font-weight:bold;color:#333;white-space:nowrap;letter-spacing:0.85px">AUX 2</div>
<div class="abs" style="left:585px;top:1349px;width:1074px;height:34px;border-radius:7px;border:2px solid #bfbfbf;background:#f3f3f3;overflow:hidden"><div style="position:absolute;left:0;top:0;width:535px;height:30px;background:#6aad5e;border-radius:5px"></div><div style="position:absolute;left:0;top:2px;width:1070px;text-align:center;font-size:24px;line-height:28px;font-weight:bold;color:#333">1500</div><div style="position:absolute;left:0;top:0;width:535px;height:30px;overflow:hidden"><div style="position:absolute;left:0;top:2px;width:1070px;text-align:center;font-size:24px;line-height:28px;font-weight:bold;color:#fff">1500</div></div></div>
<div class="abs" style="left:385.85px;top:1396px;width:180px;text-align:right;font-size:22.8px;line-height:28px;font-weight:bold;color:#333;white-space:nowrap;letter-spacing:0.85px">AUX 3</div>
<div class="abs" style="left:585px;top:1393px;width:1074px;height:34px;border-radius:7px;border:2px solid #bfbfbf;background:#f3f3f3;overflow:hidden"><div style="position:absolute;left:0;top:0;width:535px;height:30px;background:#d3da62;border-radius:5px"></div><div style="position:absolute;left:0;top:2px;width:1070px;text-align:center;font-size:24px;line-height:28px;font-weight:bold;color:#333">1500</div><div style="position:absolute;left:0;top:0;width:535px;height:30px;overflow:hidden"><div style="position:absolute;left:0;top:2px;width:1070px;text-align:center;font-size:24px;line-height:28px;font-weight:bold;color:#fff">1500</div></div></div>
<div class="abs" style="left:385.85px;top:1440px;width:180px;text-align:right;font-size:22.8px;line-height:28px;font-weight:bold;color:#333;white-space:nowrap;letter-spacing:0.85px">AUX 4</div>
<div class="abs" style="left:585px;top:1437px;width:1074px;height:34px;border-radius:7px;border:2px solid #bfbfbf;background:#f3f3f3;overflow:hidden"><div style="position:absolute;left:0;top:0;width:535px;height:30px;background:#f3c050;border-radius:5px"></div><div style="position:absolute;left:0;top:2px;width:1070px;text-align:center;font-size:24px;line-height:28px;font-weight:bold;color:#333">1500</div><div style="position:absolute;left:0;top:0;width:535px;height:30px;overflow:hidden"><div style="position:absolute;left:0;top:2px;width:1070px;text-align:center;font-size:24px;line-height:28px;font-weight:bold;color:#fff">1500</div></div></div>
<div class="abs" style="left:385.85px;top:1484px;width:180px;text-align:right;font-size:22.8px;line-height:28px;font-weight:bold;color:#333;white-space:nowrap;letter-spacing:0.85px">AUX 5</div>
<div class="abs" style="left:585px;top:1481px;width:1074px;height:34px;border-radius:7px;border:2px solid #bfbfbf;background:#f3f3f3;overflow:hidden"><div style="position:absolute;left:0;top:0;width:535px;height:30px;background:#e6644a;border-radius:5px"></div><div style="position:absolute;left:0;top:2px;width:1070px;text-align:center;font-size:24px;line-height:28px;font-weight:bold;color:#333">1500</div><div style="position:absolute;left:0;top:0;width:535px;height:30px;overflow:hidden"><div style="position:absolute;left:0;top:2px;width:1070px;text-align:center;font-size:24px;line-height:28px;font-weight:bold;color:#fff">1500</div></div></div>
<div class="abs" style="left:385.85px;top:1528px;width:180px;text-align:right;font-size:22.8px;line-height:28px;font-weight:bold;color:#333;white-space:nowrap;letter-spacing:0.85px">AUX 6</div>
<div class="abs" style="left:585px;top:1525px;width:1074px;height:34px;border-radius:7px;border:2px solid #bfbfbf;background:#f3f3f3;overflow:hidden"><div style="position:absolute;left:0;top:0;width:535px;height:30px;background:#73554b;border-radius:5px"></div><div style="position:absolute;left:0;top:2px;width:1070px;text-align:center;font-size:24px;line-height:28px;font-weight:bold;color:#333">1500</div><div style="position:absolute;left:0;top:0;width:535px;height:30px;overflow:hidden"><div style="position:absolute;left:0;top:2px;width:1070px;text-align:center;font-size:24px;line-height:28px;font-weight:bold;color:#fff">1500</div></div></div>
<div class="abs" style="left:385.85px;top:1572px;width:180px;text-align:right;font-size:22.8px;line-height:28px;font-weight:bold;color:#333;white-space:nowrap;letter-spacing:0.85px">AUX 7</div>
<div class="abs" style="left:585px;top:1569px;width:1074px;height:34px;border-radius:7px;border:2px solid #bfbfbf;background:#f3f3f3;overflow:hidden"><div style="position:absolute;left:0;top:0;width:535px;height:30px;background:#9e9e9e;border-radius:5px"></div><div style="position:absolute;left:0;top:2px;width:1070px;text-align:center;font-size:24px;line-height:28px;font-weight:bold;color:#333">1500</div><div style="position:absolute;left:0;top:0;width:535px;height:30px;overflow:hidden"><div style="position:absolute;left:0;top:2px;width:1070px;text-align:center;font-size:24px;line-height:28px;font-weight:bold;color:#fff">1500</div></div></div>
<div class="abs" style="left:385.85px;top:1616px;width:180px;text-align:right;font-size:22.8px;line-height:28px;font-weight:bold;color:#333;white-space:nowrap;letter-spacing:0.85px">AUX 8</div>
<div class="abs" style="left:585px;top:1613px;width:1074px;height:34px;border-radius:7px;border:2px solid #bfbfbf;background:#f3f3f3;overflow:hidden"><div style="position:absolute;left:0;top:0;width:535px;height:30px;background:#667c89;border-radius:5px"></div><div style="position:absolute;left:0;top:2px;width:1070px;text-align:center;font-size:24px;line-height:28px;font-weight:bold;color:#333">1500</div><div style="position:absolute;left:0;top:0;width:535px;height:30px;overflow:hidden"><div style="position:absolute;left:0;top:2px;width:1070px;text-align:center;font-size:24px;line-height:28px;font-weight:bold;color:#fff">1500</div></div></div>
<div class="abs" style="left:385.85px;top:1660px;width:180px;text-align:right;font-size:22.8px;line-height:28px;font-weight:bold;color:#333;white-space:nowrap;letter-spacing:0.85px">AUX 9</div>
<div class="abs" style="left:585px;top:1657px;width:1074px;height:34px;border-radius:7px;border:2px solid #bfbfbf;background:#f3f3f3;overflow:hidden"><div style="position:absolute;left:0;top:0;width:535px;height:30px;background:#c03a7b;border-radius:5px"></div><div style="position:absolute;left:0;top:2px;width:1070px;text-align:center;font-size:24px;line-height:28px;font-weight:bold;color:#333">1500</div><div style="position:absolute;left:0;top:0;width:535px;height:30px;overflow:hidden"><div style="position:absolute;left:0;top:2px;width:1070px;text-align:center;font-size:24px;line-height:28px;font-weight:bold;color:#fff">1500</div></div></div>
<div class="abs" style="left:385.95px;top:1704px;width:180px;text-align:right;font-size:22.8px;line-height:28px;font-weight:bold;color:#333;white-space:nowrap;letter-spacing:0.95px">AUX 10</div>
<div class="abs" style="left:585px;top:1701px;width:1074px;height:34px;border-radius:7px;border:2px solid #bfbfbf;background:#f3f3f3;overflow:hidden"><div style="position:absolute;left:0;top:0;width:535px;height:30px;background:#6e1e63;border-radius:5px"></div><div style="position:absolute;left:0;top:2px;width:1070px;text-align:center;font-size:24px;line-height:28px;font-weight:bold;color:#333">1500</div><div style="position:absolute;left:0;top:0;width:535px;height:30px;overflow:hidden"><div style="position:absolute;left:0;top:2px;width:1070px;text-align:center;font-size:24px;line-height:28px;font-weight:bold;color:#fff">1500</div></div></div>
<div class="abs" style="left:386.20px;top:1748px;width:180px;text-align:right;font-size:22.8px;line-height:28px;font-weight:bold;color:#333;white-space:nowrap;letter-spacing:1.2px">AUX 11</div>
<div class="abs" style="left:585px;top:1745px;width:1074px;height:34px;border-radius:7px;border:2px solid #bfbfbf;background:#f3f3f3;overflow:hidden"><div style="position:absolute;left:0;top:0;width:535px;height:30px;background:#497b2b;border-radius:5px"></div><div style="position:absolute;left:0;top:2px;width:1070px;text-align:center;font-size:24px;line-height:28px;font-weight:bold;color:#333">1500</div><div style="position:absolute;left:0;top:0;width:535px;height:30px;overflow:hidden"><div style="position:absolute;left:0;top:2px;width:1070px;text-align:center;font-size:24px;line-height:28px;font-weight:bold;color:#fff">1500</div></div></div>
<div class="abs" style="left:1687px;top:685px;width:1212px;height:328px;border-radius:8px;border:2px solid #cbcbcb;background:#f8f8f8;overflow:hidden"><div style="position:absolute;left:0;top:0;width:100%;height:54px;background:#838884"></div></div>
<div class="abs" style="left:1708px;top:700.4px;font-size:26px;line-height:26px;color:#fff;font-weight:bold;white-space:nowrap;">Récepteur</div>
<div class="abs" style="left:1717px;top:769px;width:459px;height:39px;border-radius:6px;border:2px solid #bdbdbd;background:#fff"></div>
<div class="abs" style="left:1736px;top:775.7px;font-size:26.4px;line-height:26.4px;color:#000;font-weight:normal;white-space:nowrap;">Série (via UART)</div>
<svg class="abs" style="left:2148.5px;top:777.5px" width="23" height="23"><path d="M3,7.760000000000001 L11.5,16.259999999999998 L20,7.760000000000001" fill="none" stroke="#000" stroke-width="1.8"/></svg>
<div class="abs" style="left:2206px;top:769.6px;font-size:23.5px;line-height:23.5px;color:#4a4a4a;font-weight:normal;white-space:nowrap;">Mode du récepteur</div>
<div class="abs" style="left:1709px;top:844px;width:1168px;height:81px;border-radius:6px;border:2px solid #f8df70;background:#fef6d3"></div>
<div class="abs" style="left:1724px;top:855.7px;font-size:22.4px;line-height:29px;color:#333;white-space:nowrap">• L'UART pour le récepteur doit être réglé sur « Rx série » (dans l'onglet <i>Ports</i> )<br>• Sélectionnez le format de données correct à partir du menu déroulant, ci-dessous:</div>
<div class="abs" style="left:1709px;top:945px;width:459px;height:39px;border-radius:6px;border:2px solid #bdbdbd;background:#fff"></div>
<div class="abs" style="left:1718px;top:953.8px;font-size:22px;line-height:22px;color:#000;font-weight:normal;white-space:nowrap;">CRSF</div>
<svg class="abs" style="left:2137.5px;top:951.5px" width="25" height="25"><path d="M3,8.32 L12.5,17.82 L22,8.32" fill="none" stroke="#000" stroke-width="3.2"/></svg>
<div class="abs" style="left:2175px;top:952.5px;font-size:23px;line-height:23px;color:#4a4a4a;font-weight:normal;white-space:nowrap;">Type de récepteur série</div>
<div class="abs" style="left:1687px;top:1034px;width:1212px;height:153px;border-radius:8px;border:2px solid #cbcbcb;background:#f8f8f8;overflow:hidden"><div style="position:absolute;left:0;top:0;width:100%;height:53px;background:#838884"></div></div>
<div class="abs" style="left:1708px;top:1048.0px;font-size:26px;line-height:26px;color:#fff;font-weight:bold;white-space:nowrap;letter-spacing:-0.3px">Télémétrie</div>
<div class="abs" style="left:2856.5px;top:1049.5px;width:27.0px;height:27.0px;border-radius:50%;background:#6c706d;color:#8a8e8b;font-size:22.9px;line-height:27.0px;text-align:center;font-weight:bold">?</div>
<div class="abs" style="left:1713px;top:1120px;width:94px;height:32px;border-radius:16px;background:#f4bd43"></div>
<div class="abs" style="left:1777px;top:1122px;width:28px;height:28px;border-radius:50%;background:#fff;box-shadow:1px 1px 2px rgba(120,80,0,.5)"></div>
<div class="abs" style="left:1871px;top:1123.9px;font-size:22.3px;line-height:22.3px;color:#222;font-weight:bold;white-space:nowrap;">TELEMETRY</div>
<div class="abs" style="left:2262px;top:1120.7px;font-size:23.4px;line-height:23.4px;color:#444;font-weight:normal;white-space:nowrap;">Sortie télémétrie</div>
<div class="abs" style="left:2832.5px;top:1127.5px;width:27.0px;height:27.0px;border-radius:50%;background:#c6c6c6;color:#fff;font-size:22.9px;line-height:27.0px;text-align:center;font-weight:bold">?</div>
<div class="abs" style="left:1687px;top:1207px;width:1212px;height:150px;border-radius:8px;border:2px solid #cbcbcb;background:#f8f8f8;overflow:hidden"><div style="position:absolute;left:0;top:0;width:100%;height:54px;background:#838884"></div></div>
<div class="abs" style="left:1708px;top:1222.1px;font-size:24.7px;line-height:24.7px;color:#fff;font-weight:bold;white-space:nowrap;">RSSI (Force du signal)</div>
<div class="abs" style="left:2856.5px;top:1222.5px;width:27.0px;height:27.0px;border-radius:50%;background:#6c706d;color:#8a8e8b;font-size:22.9px;line-height:27.0px;text-align:center;font-weight:bold">?</div>
<div class="abs" style="left:1713px;top:1292px;width:94px;height:32px;border-radius:16px;background:#d3d3d3"></div>
<div class="abs" style="left:1715px;top:1294px;width:28px;height:28px;border-radius:50%;background:#fff;box-shadow:1px 1px 3px rgba(0,0,0,.35)"></div>
<div class="abs" style="left:1872px;top:1295.6px;font-size:22.3px;line-height:22.3px;color:#222;font-weight:bold;white-space:nowrap;">RSSI_ADC</div>
<div class="abs" style="left:2192px;top:1295.7px;font-size:22.2px;line-height:22.2px;color:#444;font-weight:normal;white-space:nowrap;">entrée RSSI analogique</div>
<div class="abs" style="left:1687px;top:1377px;width:1213px;height:108px;border-radius:8px;border:2px solid #cbcbcb;background:#f8f8f8;overflow:hidden"><div style="position:absolute;left:0;top:0;width:100%;height:44px;background:#838884"></div></div>
<div class="abs" style="left:2534px;top:1379px;width:2px;height:104px;background:#c4c4c4"></div>
<div class="abs" style="left:1701px;top:1388.5px;font-size:24.8px;line-height:24.8px;color:#fff;font-weight:normal;white-space:nowrap;">Ordre des voies</div>
<div class="abs" style="left:2544px;top:1388.5px;font-size:24.8px;line-height:24.8px;color:#fff;font-weight:normal;white-space:nowrap;">Canal RSSI</div>
<div class="abs" style="left:1697px;top:1431px;width:825px;height:44px;border-radius:6px;border:2px solid #bdbdbd;background:#fff"></div>
<div class="abs" style="left:2484px;top:1433px;width:2px;height:40px;background:#c8c8c8"></div>
<div class="abs" style="left:1708px;top:1440.2px;font-size:26.3px;line-height:26.3px;color:#000;font-weight:normal;white-space:nowrap;">AETR1234</div>
<svg class="abs" style="left:2492.5px;top:1441.5px" width="23" height="23"><path d="M3,7.760000000000001 L11.5,16.259999999999998 L20,7.760000000000001" fill="none" stroke="#000" stroke-width="1.8"/></svg>
<div class="abs" style="left:2544px;top:1431px;width:341px;height:44px;border-radius:6px;border:2px solid #bdbdbd;background:#fff"></div>
<div class="abs" style="left:2563px;top:1440.1px;font-size:26.5px;line-height:26.5px;color:#000;font-weight:normal;white-space:nowrap;">Désactivé</div>
<svg class="abs" style="left:2855.5px;top:1441.5px" width="23" height="23"><path d="M3,7.760000000000001 L11.5,16.259999999999998 L20,7.760000000000001" fill="none" stroke="#000" stroke-width="1.8"/></svg>
<div class="abs" style="left:1687px;top:1506px;width:1216px;height:118px;border-radius:8px;border:2px solid #cbcbcb;background:#f8f8f8;overflow:hidden"><div style="position:absolute;left:0;top:0;width:100%;height:47px;background:#838884"></div></div>
<div class="abs" style="left:2092px;top:1508px;width:2px;height:114px;background:#c4c4c4"></div>
<div class="abs" style="left:2497px;top:1508px;width:2px;height:114px;background:#c4c4c4"></div>
<div class="abs" style="left:1701px;top:1518.0px;font-size:24.8px;line-height:24.8px;color:#fff;font-weight:normal;white-space:nowrap;">'Manche en bas'</div>
<div class="abs" style="left:1700px;top:1567px;width:331px;height:43px;border-radius:7px;border:2px solid #bdbdbd;background:#fff;overflow:hidden"><div style="position:absolute;right:0;top:0;width:30px;height:100%;background:#efefef"></div></div>
<svg class="abs" style="left:2000px;top:1567px" width="30" height="43"><path d="M8,15 L15,7 L22,15 Z M8,28 L15,36 L22,28 Z" fill="#4e4e4e"/></svg>
<div class="abs" style="left:1700px;top:1575.6px;width:290px;text-align:right;font-size:26.5px;line-height:26.5px;color:#000">1050</div>
<div class="abs" style="left:2048px;top:1573px;width:28px;height:28px;border-radius:50%;background:#c4c4c4;color:#fff;font-size:23.8px;line-height:28px;text-align:center;font-weight:bold">?</div>
<div class="abs" style="left:2107px;top:1518.0px;font-size:24.8px;line-height:24.8px;color:#fff;font-weight:normal;white-space:nowrap;">Manche au neutre</div>
<div class="abs" style="left:2105px;top:1567px;width:331px;height:43px;border-radius:7px;border:2px solid #bdbdbd;background:#fff;overflow:hidden"><div style="position:absolute;right:0;top:0;width:30px;height:100%;background:#efefef"></div></div>
<svg class="abs" style="left:2405px;top:1567px" width="30" height="43"><path d="M8,15 L15,7 L22,15 Z M8,28 L15,36 L22,28 Z" fill="#4e4e4e"/></svg>
<div class="abs" style="left:2105px;top:1575.6px;width:290px;text-align:right;font-size:26.5px;line-height:26.5px;color:#000">1500</div>
<div class="abs" style="left:2453px;top:1573px;width:28px;height:28px;border-radius:50%;background:#c4c4c4;color:#fff;font-size:23.8px;line-height:28px;text-align:center;font-weight:bold">?</div>
<div class="abs" style="left:2511px;top:1518.0px;font-size:24.8px;line-height:24.8px;color:#fff;font-weight:normal;white-space:nowrap;">'Manche en haut'</div>
<div class="abs" style="left:2510px;top:1567px;width:331px;height:43px;border-radius:7px;border:2px solid #bdbdbd;background:#fff;overflow:hidden"><div style="position:absolute;right:0;top:0;width:30px;height:100%;background:#efefef"></div></div>
<svg class="abs" style="left:2810px;top:1567px" width="30" height="43"><path d="M8,15 L15,7 L22,15 Z M8,28 L15,36 L22,28 Z" fill="#4e4e4e"/></svg>
<div class="abs" style="left:2510px;top:1575.6px;width:290px;text-align:right;font-size:26.5px;line-height:26.5px;color:#000">1900</div>
<div class="abs" style="left:2857px;top:1573px;width:28px;height:28px;border-radius:50%;background:#c4c4c4;color:#fff;font-size:23.8px;line-height:28px;text-align:center;font-weight:bold">?</div>
<div class="abs" style="left:1687px;top:1645px;width:1216px;height:119px;border-radius:8px;border:2px solid #cbcbcb;background:#f8f8f8;overflow:hidden"><div style="position:absolute;left:0;top:0;width:100%;height:48px;background:#838884"></div></div>
<div class="abs" style="left:2092px;top:1647px;width:2px;height:115px;background:#c4c4c4"></div>
<div class="abs" style="left:2497px;top:1647px;width:2px;height:115px;background:#c4c4c4"></div>
<div class="abs" style="left:1701px;top:1657.5px;font-size:24.8px;line-height:24.8px;color:#fff;font-weight:normal;white-space:nowrap;">Bande neutre RC</div>
<div class="abs" style="left:1700px;top:1707px;width:331px;height:43px;border-radius:7px;border:2px solid #bdbdbd;background:#fff;overflow:hidden"><div style="position:absolute;right:0;top:0;width:30px;height:100%;background:#efefef"></div></div>
<svg class="abs" style="left:2000px;top:1707px" width="30" height="43"><path d="M8,15 L15,7 L22,15 Z M8,28 L15,36 L22,28 Z" fill="#4e4e4e"/></svg>
<div class="abs" style="left:1700px;top:1715.6px;width:290px;text-align:right;font-size:26.5px;line-height:26.5px;color:#000">0</div>
<div class="abs" style="left:2048px;top:1713px;width:28px;height:28px;border-radius:50%;background:#c4c4c4;color:#fff;font-size:23.8px;line-height:28px;text-align:center;font-weight:bold">?</div>
<div class="abs" style="left:2107px;top:1657.5px;font-size:24.8px;line-height:24.8px;color:#fff;font-weight:normal;white-space:nowrap;">Bande neutre Yaw</div>
<div class="abs" style="left:2105px;top:1707px;width:331px;height:43px;border-radius:7px;border:2px solid #bdbdbd;background:#fff;overflow:hidden"><div style="position:absolute;right:0;top:0;width:30px;height:100%;background:#efefef"></div></div>
<svg class="abs" style="left:2405px;top:1707px" width="30" height="43"><path d="M8,15 L15,7 L22,15 Z M8,28 L15,36 L22,28 Z" fill="#4e4e4e"/></svg>
<div class="abs" style="left:2105px;top:1715.6px;width:290px;text-align:right;font-size:26.5px;line-height:26.5px;color:#000">0</div>
<div class="abs" style="left:2453px;top:1713px;width:28px;height:28px;border-radius:50%;background:#c4c4c4;color:#fff;font-size:23.8px;line-height:28px;text-align:center;font-weight:bold">?</div>
<div class="abs" style="left:2511px;top:1657.5px;font-size:24.8px;line-height:24.8px;color:#fff;font-weight:normal;white-space:nowrap;">bande neutre gaz 3D</div>
<div class="abs" style="left:2510px;top:1707px;width:331px;height:43px;border-radius:7px;border:2px solid #bdbdbd;background:#fff;overflow:hidden"><div style="position:absolute;right:0;top:0;width:30px;height:100%;background:#efefef"></div></div>
<svg class="abs" style="left:2810px;top:1707px" width="30" height="43"><path d="M8,15 L15,7 L22,15 Z M8,28 L15,36 L22,28 Z" fill="#4e4e4e"/></svg>
<div class="abs" style="left:2510px;top:1715.6px;width:290px;text-align:right;font-size:26.5px;line-height:26.5px;color:#000">50</div>
<div class="abs" style="left:2857px;top:1713px;width:28px;height:28px;border-radius:50%;background:#c4c4c4;color:#fff;font-size:23.8px;line-height:28px;text-align:center;font-weight:bold">?</div>
<div id="toolbar">
<div class="btn" style="left:1787px;top:21px;width:294px;height:59px;line-height:55px">Appairer le récepteur</div>
<div class="btn" style="left:2122px;top:21px;width:158px;height:59px;line-height:55px">Rafraîchir</div>
<div class="btn" style="left:2320px;top:21px;width:173px;height:59px;line-height:55px">Enregistrer</div>
</div>
<div id="bottom">
<span class="abs" style="left:20px;top:8.7px;font-size:24px;line-height:24px;letter-spacing:0.30px;white-space:nowrap">Utilisation du port: D: 25 % U: 2 %</span>
<span class="abs" style="left:438px;top:8.7px;font-size:24px;line-height:24px;letter-spacing:0.44px;white-space:nowrap">Erreur paquet: 0</span>
<span class="abs" style="left:661px;top:8.7px;font-size:24px;line-height:24px;letter-spacing:0.02px;white-space:nowrap">Erreur I2C: 10</span>
<span class="abs" style="left:855px;top:8.7px;font-size:24px;line-height:24px;letter-spacing:0.14px;white-space:nowrap">Durée de cycle: 126</span>
<span class="abs" style="left:1115px;top:8.7px;font-size:24px;line-height:24px;letter-spacing:-0.43px;white-space:nowrap">Charge CPU: 15 %</span>
<span class="abs" style="left:1824px;top:8.7px;font-size:24px;line-height:24px;letter-spacing:-0.09px;white-space:nowrap">Configurateur: 10.10.0 (c97deaf) , Micrologiciel: 4.5.2 BTFL , Cible: SQRE/SEQUREH7V2(STM32H743)</span>
<div class="abs" style="left:414px;top:0;width:2px;height:40px;background:#83837e"></div>
<div class="abs" style="left:639px;top:0;width:2px;height:40px;background:#83837e"></div>
<div class="abs" style="left:833px;top:0;width:2px;height:40px;background:#83837e"></div>
<div class="abs" style="left:1093px;top:0;width:2px;height:40px;background:#83837e"></div>
<div class="abs" style="left:1801px;top:0;width:2px;height:40px;background:#83837e"></div>
</div>
</body></html>
